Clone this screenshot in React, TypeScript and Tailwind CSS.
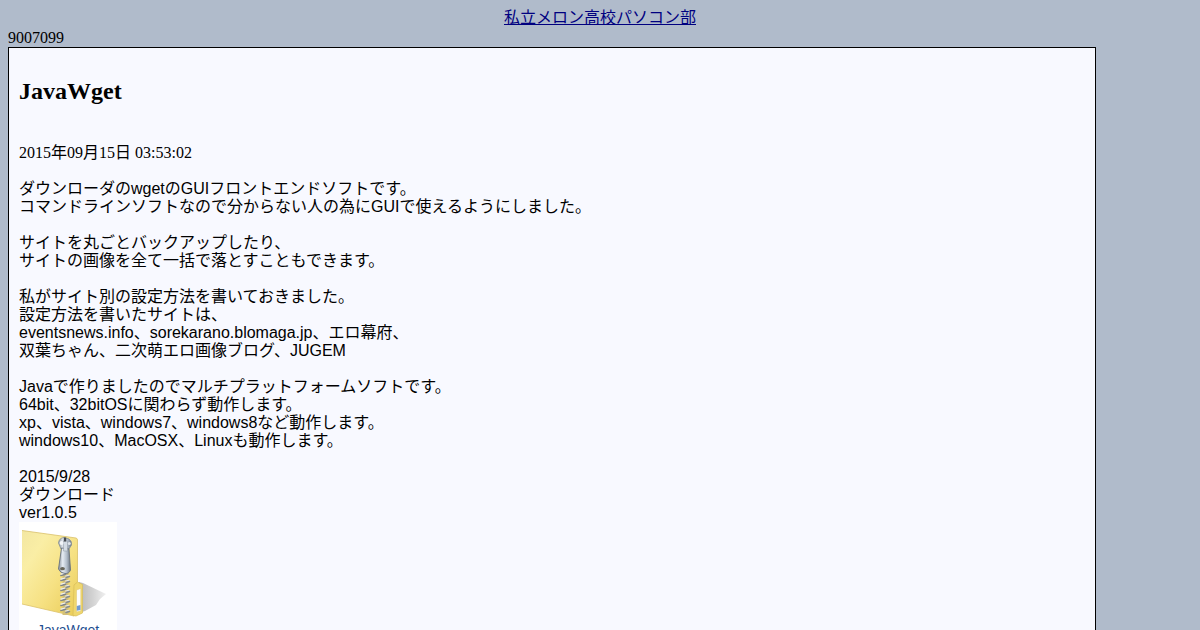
const lines = [
  "ダウンローダのwgetのGUIフロントエンドソフトです。",
  "コマンドラインソフトなので分からない人の為にGUIで使えるようにしました。",
  "",
  "サイトを丸ごとバックアップしたり、",
  "サイトの画像を全て一括で落とすこともできます。",
  "",
  "私がサイト別の設定方法を書いておきました。",
  "設定方法を書いたサイトは、",
  "eventsnews.info、sorekarano.blomaga.jp、エロ幕府、",
  "双葉ちゃん、二次萌エロ画像ブログ、JUGEM",
  "",
  "Javaで作りましたのでマルチプラットフォームソフトです。",
  "64bit、32bitOSに関わらず動作します。",
  "xp、vista、windows7、windows8など動作します。",
  "windows10、MacOSX、Linuxも動作します。",
  "",
  "2015/9/28",
  "ダウンロード",
  "ver1.0.5",
];

// y of each tooth of the zipper, from the slider down
const teeth = [51, 56, 61, 66, 71, 76, 81, 86];

function ZipFolder() {
  return (
    <svg width="98" height="97" viewBox="0 0 98 97" className="block">
      <defs>
        <linearGradient id="front" x1="0" y1="0" x2="1" y2="1">
          <stop offset="0" stopColor="#f3e7a2" />
          <stop offset="0.25" stopColor="#faeea5" />
          <stop offset="0.6" stopColor="#f6e183" />
          <stop offset="1" stopColor="#e9cb55" />
        </linearGradient>
        <linearGradient id="metal" x1="0" y1="0" x2="1" y2="0">
          <stop offset="0" stopColor="#8a929c" />
          <stop offset="0.35" stopColor="#e6ecf3" />
          <stop offset="0.7" stopColor="#b0bbc8" />
          <stop offset="1" stopColor="#6a7480" />
        </linearGradient>
        <linearGradient id="shadow" x1="0" y1="0" x2="1" y2="0">
          <stop offset="0" stopColor="#b8b8b8" />
          <stop offset="0.5" stopColor="#d2d2d2" />
          <stop offset="1" stopColor="#f0f0f0" />
        </linearGradient>
        <filter id="soft" x="-20%" y="-20%" width="140%" height="140%">
          <feGaussianBlur stdDeviation="0.7" />
        </filter>
      </defs>
      <path d="M60 60 L64 61 L87 72 L81 77 L77 83 L66 89 L60 91Z" fill="url(#shadow)" filter="url(#soft)" />
      <path d="M3 8.5 L57 16 Q58.5 16.5 58.5 18 L58.5 92 L55 94 L3 82Z" fill="url(#front)" />
      <path d="M3 8.5 L57 16 Q58.5 16.5 58.5 18 L58.5 60" fill="none" stroke="#d9c06a" strokeWidth="0.8" />
      <path d="M3 82 L55 94" stroke="#dcc26a" strokeWidth="0.8" />
      <path d="M55 63 L58.5 60 L63.5 62.5 L63.5 91 L57 94 L54 93.5Z" fill="#efd76e" stroke="#d9bd57" strokeWidth="0.7" />
      <path d="M57.5 68 L61.8 66.5 L61.8 89 L57.5 90Z" fill="#fcfdff" stroke="#dfc46a" strokeWidth="0.5" />
      <path d="M57.8 84 L61.4 83 L61.4 88 L57.8 88.8Z" fill="#6f9ad3" />
      <path d="M46.5 49 V93" stroke="#d3c07a" strokeWidth="6" />
      {teeth.map((y) => (
        <g key={y} fill="none" strokeLinecap="round">
          <path d={`M42 ${y + 2.5} L46.5 ${y + 1.2}`} stroke="#7f8488" strokeWidth="1.7" />
          <path d={`M42 ${y + 1.1} L46 ${y}`} stroke="#eceef0" strokeWidth="1.2" />
          <path d={`M47 ${y + 4.4} L50.5 ${y + 3.6}`} stroke="#858b92" strokeWidth="1.5" />
          <path d={`M46.5 ${y + 3} L50 ${y + 2.2}`} stroke="#e3e7eb" strokeWidth="1" />
        </g>
      ))}
      <path d="M39.5 21 Q40 16 45 15.5 L50 17 Q53 19 52.5 23 L50 27 L42 27Z" fill="url(#metal)" stroke="#848e97" strokeWidth="0.8" />
      <path d="M42.5 26 L50 27 L51.5 48 Q50 52 46 51.5 Q41 51 39.5 47Z" fill="url(#metal)" stroke="#66717d" strokeWidth="0.9" />
      <path d="M44.5 19 L48.5 19 L48.5 29 L44.5 29Z" fill="#d3dbe3" stroke="#8a949f" strokeWidth="0.5" />
      <path d="M46 15.5 V19.5" stroke="#454b50" strokeWidth="2.4" />
      <circle cx="42.5" cy="21" r="2" fill="#f2f5f8" />
      <circle cx="50.3" cy="21.5" r="1.5" fill="#dee4ea" />
      <ellipse cx="43.5" cy="46.7" rx="2.4" ry="1.6" fill="#67655a" />
    </svg>
  );
}

export default function App() {
  return (
    <div className="h-[630px] overflow-hidden bg-[#b0bbcb] px-2 pt-2 font-['Liberation_Serif','Noto_Sans_CJK_JP',serif] text-base leading-[18px] text-black">
      <div className="h-5 text-center leading-5">
        <a href="#" className="text-[#000080] underline">
          私立メロン高校パソコン部
        </a>
      </div>
      <div className="h-[19px] leading-[19px]">9007099</div>
      <div className="w-[1088px] border border-black bg-[#f8f9ff] px-2.5 pb-10">
        <h2 className="pt-[29px] text-2xl leading-7 font-bold">JavaWget</h2>
        <p className="mt-[39px] h-[18px]">2015年09月15日 03:53:02</p>
        <div className="mt-[18px] font-['Liberation_Sans','Noto_Sans_CJK_JP',sans-serif]">
          {lines.map((line, i) => (
            <p key={i} className="h-[18px] whitespace-nowrap">
              {line}
            </p>
          ))}
          <div className="h-[130px] w-[98px] bg-white">
            <ZipFolder />
            <a href="#" className="block pt-0.5 text-center text-sm leading-[18px] text-[#1f4f91]">
              JavaWget
            </a>
          </div>
        </div>
      </div>
    </div>
  );
}
